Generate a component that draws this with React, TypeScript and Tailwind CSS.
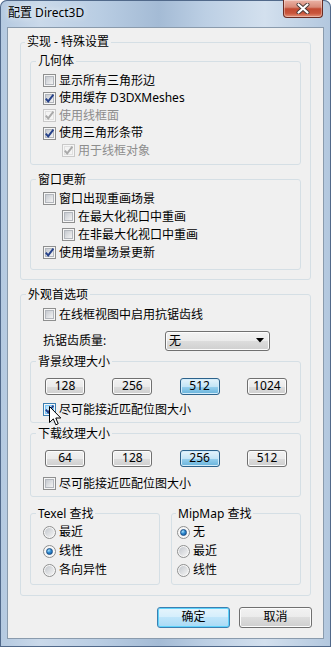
import React from "react";

function CheckBox({ checked, disabled, hot }: { checked?: boolean; disabled?: boolean; hot?: boolean }) {
  const outer = disabled ? "border-[#c9c9c9]" : hot ? "border-[#3c7fb1]" : "border-[#8e8f8f]";
  const inner = disabled
    ? "border-[#e0e0e0] bg-[#f4f4f4]"
    : hot
    ? "border-[#79c6f9] bg-[linear-gradient(135deg,#b1dffd,#e9f7fe)]"
    : "border-[#b3b7bd] bg-[linear-gradient(135deg,#c6cad0,#f3f3f3)]";
  return (
    <div className={`relative w-[13px] h-[13px] shrink-0 border ${outer} bg-[#f6f6f6] p-[1px]`}>
      <div className={`w-full h-full border ${inner}`} />
      {checked && (
        <svg className="absolute left-0 top-0" width="11" height="11" viewBox="0 0 11 11">
          <path
            d="M1.8 5.6 L4.2 8.4 L9.4 1.6"
            fill="none"
            stroke={disabled ? "#a9a9a9" : "#25418a"}
            strokeWidth="1.9"
          />
        </svg>
      )}
    </div>
  );
}

function Radio({ checked }: { checked?: boolean }) {
  return (
    <div className="w-[13px] h-[13px] shrink-0 rounded-full border border-[#8e8f8f] bg-[#f7f7f7] flex items-center justify-center">
      {checked ? (
        <div className="w-[7px] h-[7px] rounded-full border border-[#1c4f86] bg-[radial-gradient(circle_at_35%_30%,#a9e1fb,#2f8ad0_45%,#0b4f96)]" />
      ) : (
        <div className="w-[9px] h-[9px] rounded-full bg-[linear-gradient(135deg,#c3c7cd,#f4f4f4)]" />
      )}
    </div>
  );
}

function CheckRow({
  label,
  checked,
  disabled,
  hot,
  cls,
}: {
  label: string;
  checked?: boolean;
  disabled?: boolean;
  hot?: boolean;
  cls: string;
}) {
  return (
    <div className={`flex items-center gap-[3px] ${cls}`}>
      <CheckBox checked={checked} disabled={disabled} hot={hot} />
      <span className={`leading-[16px] whitespace-nowrap ${disabled ? "text-[#8d8d8d]" : "text-black"}`}>{label}</span>
    </div>
  );
}

function RadioRow({ label, checked }: { label: string; checked?: boolean }) {
  return (
    <div className="flex items-center gap-[3px] h-[19px]">
      <Radio checked={checked} />
      <span className="leading-[16px] whitespace-nowrap">{label}</span>
    </div>
  );
}

function SizeBtn({ label, sel }: { label: string; sel?: boolean }) {
  return (
    <div
      className={`w-[40px] h-[17px] rounded-[3px] border flex items-center justify-center leading-[14px] ${
        sel
          ? "border-[#2c628b] bg-[linear-gradient(#e5f4fc,#c4e5f6_50%,#98d1ef_50%,#68b3db)] shadow-[inset_0_0_0_1px_#d3ecfa]"
          : "border-[#707070] bg-[linear-gradient(#f2f2f2,#ebebeb_50%,#dddddd_50%,#cfcfcf)] shadow-[inset_0_0_0_1px_#fcfcfc]"
      }`}
    >
      {label}
    </div>
  );
}

function Legend({ text, cls }: { text: string; cls: string }) {
  return <legend className={`px-[2px] leading-[16px] whitespace-nowrap ${cls}`}>{text}</legend>;
}

export default function App() {
  return (
    <div className="relative w-[331px] h-[647px] flex flex-col rounded-t-[7px] overflow-hidden bg-[linear-gradient(90deg,#b4c9e0,#cad9ea_12%,#b9cde3_30%,#a4bbd5_48%,#bccfe4_62%,#d3e0ee_80%,#b2c7de)] shadow-[inset_0_0_0_1px_#51698a] text-[12px] text-black font-[family-name:'Noto_Sans','Noto_Sans_CJK_SC',sans-serif]">
      {/* title bar */}
      <div className="h-[27px] shrink-0 flex items-start justify-between">
        <span className="ml-[8px] mt-[5px] leading-[16px] whitespace-nowrap [text-shadow:0_0_6px_#ffffff]">配置 Direct3D</span>
        <div className="mr-[8px] w-[40px] h-[18px] rounded-b-[4px] border border-t-0 border-[#6a2b22] bg-[linear-gradient(#ebb3a6,#d88a78_42%,#c24a32_52%,#c9553b_78%,#e4937a)] shadow-[inset_0_0_0_1px_rgba(255,255,255,0.35)] flex items-center justify-center">
          <svg width="14" height="11" viewBox="0 0 14 11">
            <path d="M2.5 1.5 L11.5 9.5 M11.5 1.5 L2.5 9.5" stroke="#4a3a38" strokeWidth="4" strokeLinecap="round" fill="none" />
            <path d="M2.5 1.5 L11.5 9.5 M11.5 1.5 L2.5 9.5" stroke="#ffffff" strokeWidth="2.2" strokeLinecap="round" fill="none" />
          </svg>
        </div>
      </div>

      {/* client area */}
      <div className="flex-1 mx-[7px] mb-[8px] border border-[#8a9bad] bg-[#f0f0f0] flex flex-col px-[12px] pt-[6px]">
        {/* 实现 - 特殊设置 */}
        <fieldset className="border border-[#d5dfe5] rounded-[3px]">
          <Legend text="实现 - 特殊设置" cls="ml-[4px]" />
          <div className="px-[9px] pt-[3px] pb-[9px] flex flex-col">
            <fieldset className="border border-[#d5dfe5] rounded-[3px]">
              <Legend text="几何体" cls="ml-[5px]" />
              <div className="pl-[12px] pt-[3px] pb-[4px] flex flex-col">
                <CheckRow label="显示所有三角形边" cls="h-[17.5px]" />
                <CheckRow label="使用缓存 D3DXMeshes" checked cls="h-[17.5px]" />
                <CheckRow label="使用线框面" checked disabled cls="h-[17.5px]" />
                <CheckRow label="使用三角形条带" checked cls="h-[17.5px]" />
                <CheckRow label="用于线框对象" checked disabled cls="h-[17.5px] pl-[19px]" />
              </div>
            </fieldset>
            <fieldset className="mt-[7px] border border-[#d5dfe5] rounded-[3px]">
              <Legend text="窗口更新" cls="ml-[5px]" />
              <div className="pl-[12px] pt-[2px] pb-[7px] flex flex-col">
                <CheckRow label="窗口出现重画场景" cls="h-[18px]" />
                <CheckRow label="在最大化视口中重画" cls="h-[18px] pl-[19px]" />
                <CheckRow label="在非最大化视口中重画" cls="h-[18px] pl-[19px]" />
                <CheckRow label="使用增量场景更新" checked cls="h-[18px]" />
              </div>
            </fieldset>
          </div>
        </fieldset>

        {/* 外观首选项 */}
        <fieldset className="mt-[7px] border border-[#d5dfe5] rounded-[3px]">
          <Legend text="外观首选项" cls="ml-[5px]" />
          <div className="px-[9px] pt-[3px] pb-[10px] flex flex-col">
            <CheckRow label="在线框视图中启用抗锯齿线" cls="h-[18px] pl-[13px]" />
            <div className="mt-[7px] h-[20px] flex items-center pl-[13px]">
              <span className="w-[122px] leading-[16px] whitespace-nowrap">抗锯齿质量:</span>
              <div className="w-[105px] h-[20px] rounded-[3px] border border-[#707070] bg-[linear-gradient(#f2f2f2,#ebebeb_50%,#dddddd_50%,#cfcfcf)] shadow-[inset_0_0_0_1px_#fcfcfc] flex items-center justify-between pl-[3px] pr-[5px]">
                <span className="leading-[16px]">无</span>
                <svg width="8" height="5" viewBox="0 0 8 5">
                  <path d="M0 0 H8 L4 4.5 Z" fill="#000" />
                </svg>
              </div>
            </div>

            <fieldset className="mt-[3px] border border-[#d5dfe5] rounded-[3px]">
              <Legend text="背景纹理大小" cls="ml-[5px]" />
              <div className="pl-[12px] pr-[13px] pt-[8px] pb-[3px] flex flex-col">
                <div className="pl-[2px] flex justify-between">
                  <SizeBtn label="128" />
                  <SizeBtn label="256" />
                  <SizeBtn label="512" sel />
                  <SizeBtn label="1024" />
                </div>
                <CheckRow label="尽可能接近匹配位图大小" checked hot cls="mt-[6px] h-[18px]" />
              </div>
            </fieldset>

            <fieldset className="mt-[3px] border border-[#d5dfe5] rounded-[3px]">
              <Legend text="下载纹理大小" cls="ml-[5px]" />
              <div className="pl-[12px] pr-[13px] pt-[8px] pb-[3px] flex flex-col">
                <div className="pl-[2px] flex justify-between">
                  <SizeBtn label="64" />
                  <SizeBtn label="128" />
                  <SizeBtn label="256" sel />
                  <SizeBtn label="512" />
                </div>
                <CheckRow label="尽可能接近匹配位图大小" cls="mt-[8px] h-[18px]" />
              </div>
            </fieldset>

            <div className="mt-[9px] flex gap-[11px]">
              <fieldset className="flex-1 border border-[#d5dfe5] rounded-[3px]">
                <Legend text="Texel 查找" cls="ml-[5px]" />
                <div className="pl-[12px] pt-[1px] pb-[4px] flex flex-col">
                  <RadioRow label="最近" />
                  <RadioRow label="线性" checked />
                  <RadioRow label="各向异性" />
                </div>
              </fieldset>
              <fieldset className="flex-1 border border-[#d5dfe5] rounded-[3px]">
                <Legend text="MipMap 查找" cls="ml-[4px]" />
                <div className="pl-[5px] pt-[1px] pb-[4px] flex flex-col">
                  <RadioRow label="无" checked />
                  <RadioRow label="最近" />
                  <RadioRow label="线性" />
                </div>
              </fieldset>
            </div>
          </div>
        </fieldset>

        {/* dialog buttons */}
        <div className="mt-[11px] -mr-[1px] flex justify-end gap-[9px]">
          <div className="w-[73px] h-[21px] rounded-[3px] border border-[#3c7fb1] bg-[linear-gradient(#e5f4fc,#d4eefc_50%,#bfe5fa_50%,#a9daf5)] shadow-[inset_0_0_0_1px_#5fd3fb] flex items-center justify-center leading-[16px]">
            确定
          </div>
          <div className="w-[73px] h-[21px] rounded-[3px] border border-[#707070] bg-[linear-gradient(#f2f2f2,#ebebeb_50%,#dddddd_50%,#cfcfcf)] shadow-[inset_0_0_0_1px_#fcfcfc] flex items-center justify-center leading-[16px]">
            取消
          </div>
        </div>
      </div>

      {/* mouse pointer */}
      <svg className="absolute left-[49px] top-[406px]" width="13" height="21" viewBox="0 0 13 21">
        <path
          d="M0.5 0.5 L0.5 16.5 L4.3 12.9 L6.8 18.8 L9.2 17.8 L6.8 12 L11.8 12 Z"
          fill="#ffffff"
          stroke="#000000"
          strokeWidth="1"
          strokeLinejoin="miter"
        />
      </svg>
    </div>
  );
}
